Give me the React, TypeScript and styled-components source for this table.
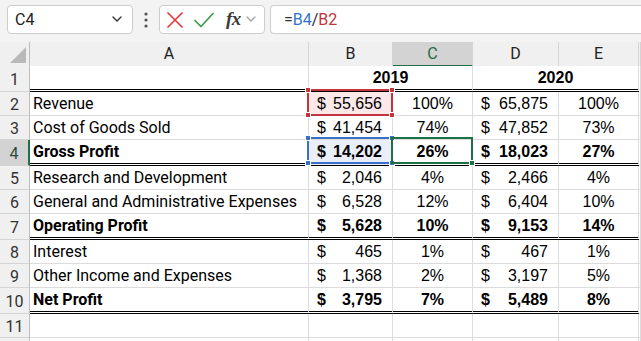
import React from "react";
import styled, { createGlobalStyle, css } from "styled-components";

const Global = createGlobalStyle`
  html, body { margin: 0; padding: 0; background: #f3f3f3; overflow: hidden; }
  body { width: 641px; height: 341px; }
  * { box-sizing: border-box; }
`;

const LABEL_FONT = `Roboto, "Noto Sans", sans-serif`;
const NUM_FONT = `"Liberation Sans", Arial, sans-serif`;
const COLS = "30px 279px 84px 80px 86px 80px 1fr";

const Page = styled.div`
  width: 641px;
  height: 341px;
  display: flex;
  flex-direction: column;
  overflow: hidden;
`;

const Toolbar = styled.div`
  height: 42px;
  flex: none;
  display: flex;
  align-items: flex-start;
  padding: 5px 0 0 7px;
  background: #f3f3f3;
`;

const Box = styled.div`
  height: 29px;
  background: #fff;
  border: 1px solid #cdcdcd;
  border-radius: 4px;
  display: flex;
  align-items: center;
`;

const NameBox = styled(Box)`
  width: 126px;
  padding: 0 10px 0 7px;
  justify-content: space-between;
  font: 16px ${LABEL_FONT};
  color: #222;
`;

const KebabSlot = styled.div`
  width: 26px;
  height: 29px;
  display: flex;
  align-items: center;
  justify-content: center;
`;

const FxBox = styled(Box)`
  width: 106px;
  padding-left: 7px;
`;

const FxText = styled.span`
  font-family: "Liberation Serif", "DejaVu Serif", serif;
  font-style: italic;
  font-weight: 700;
  font-size: 19px;
  color: #3a3a3a;
  margin-left: 12px;
  letter-spacing: -0.5px;
  line-height: 1;
  padding-bottom: 2px;
`;

const SmallChevronSlot = styled.span`
  margin-left: 5px;
  display: flex;
`;

const FormulaBox = styled(Box)`
  flex: 1;
  margin-left: 5px;
  padding-left: 13px;
  border-right: none;
  border-radius: 4px 0 0 4px;
  font: 16px ${LABEL_FONT};
  color: #333;
`;

const Ref = styled.span<{ $c: string }>`
  color: ${(p) => p.$c};
`;

const Sheet = styled.div`
  flex: 1;
  background: #fff;
  display: flex;
  flex-direction: column;
`;

const Row = styled.div<{ $h: number }>`
  display: grid;
  grid-template-columns: ${COLS};
  height: ${(p) => p.$h}px;
  flex: none;
`;

const HeadCell = styled.div<{ $active?: boolean }>`
  background: ${(p) => (p.$active ? "#d3d3d3" : "#f0f0f0")};
  border-right: 1px solid #d4d4d4;
  border-bottom: ${(p) => (p.$active ? "2px solid #1e7145" : "1px solid #bdbdbd")};
  color: ${(p) => (p.$active ? "#1e6b41" : "#222")};
  font: 16px/23px ${LABEL_FONT};
  text-align: center;
`;

const Corner = styled.div`
  background: #f0f0f0;
  border-right: 1px solid #bdbdbd;
  border-bottom: 1px solid #bdbdbd;
  display: flex;
  align-items: flex-end;
  justify-content: flex-end;
  padding: 0 3px 3px 0;
`;

const RowHead = styled.div<{ $active?: boolean }>`
  background: ${(p) => (p.$active ? "#d3d3d3" : "#f0f0f0")};
  border-right: ${(p) => (p.$active ? "2px solid #1e7145" : "1px solid #bdbdbd")};
  border-bottom: 1px solid #d4d4d4;
  color: ${(p) => (p.$active ? "#2b4a3a" : "#333")};
  font: 16px ${LABEL_FONT};
  display: flex;
  align-items: center;
  justify-content: center;
  padding-top: 2px;
`;

const DoubleLine = css`
  border-bottom: 3px double #000;
`;

const SingleLine = css`
  border-bottom: 1px solid #dcdcdc;
`;

const Cell = styled.div<{
  $double?: boolean;
  $bold?: boolean;
  $span?: number;
  $fill?: string;
}>`
  position: relative;
  background: ${(p) => p.$fill || "#fff"};
  border-right: 1px solid #dcdcdc;
  ${(p) => (p.$double ? DoubleLine : SingleLine)}
  font-weight: ${(p) => (p.$bold ? 700 : 400)};
  color: #000;
  font-size: 16px;
  line-height: 23px;
  white-space: nowrap;
  ${(p) => (p.$span ? `grid-column: span ${p.$span};` : "")}
`;

const LabelCell = styled(Cell)`
  font-family: ${LABEL_FONT};
  padding-left: 3px;
`;

const AcctCell = styled(Cell)`
  font-family: ${NUM_FONT};
  display: flex;
  justify-content: space-between;
  padding: 0 10px 0 8px;
`;

const CenterCell = styled(Cell)`
  font-family: ${NUM_FONT};
  text-align: center;
`;

const Mark = styled.div<{ $c: string }>`
  position: absolute;
  z-index: 3;
  top: -3px;
  left: -2px;
  right: -1px;
  bottom: -1px;
  border: 2px solid ${(p) => p.$c};
  pointer-events: none;
`;

const Handle = styled.span<{ $c: string; $pos: string }>`
  position: absolute;
  width: 6px;
  height: 6px;
  background: ${(p) => p.$c};
  border: 1px solid #fff;
  ${(p) => p.$pos}
`;

const RefBox = ({ color }: { color: string }) => (
  <Mark $c={color}>
    <Handle $c={color} $pos="top:-4px;left:-4px;" />
    <Handle $c={color} $pos="top:-4px;right:-4px;" />
    <Handle $c={color} $pos="bottom:-4px;left:-4px;" />
    <Handle $c={color} $pos="bottom:-4px;right:-4px;" />
  </Mark>
);

const ActiveBox = () => (
  <Mark $c="#1e7145">
    <Handle $c="#1e7145" $pos="bottom:-4px;right:-4px;" />
  </Mark>
);

const Chevron = ({ color, w, sw }: { color: string; w: number; sw: number }) => (
  <svg width={w} height={w / 2 + 2} viewBox={`0 0 ${w} ${w / 2 + 2}`}>
    <polyline
      points={`1,1 ${w / 2},${w / 2} ${w - 1},1`}
      fill="none"
      stroke={color}
      strokeWidth={sw}
      strokeLinecap="round"
      strokeLinejoin="round"
    />
  </svg>
);

const Kebab = () => (
  <svg width="4" height="16" viewBox="0 0 4 16">
    <circle cx="2" cy="2" r="1.6" fill="#555" />
    <circle cx="2" cy="8" r="1.6" fill="#555" />
    <circle cx="2" cy="14" r="1.6" fill="#555" />
  </svg>
);

const Cross = () => (
  <svg width="16" height="16" viewBox="0 0 16 16">
    <path d="M1 1 L15 15 M15 1 L1 15" stroke="#e23b3f" strokeWidth="1.7" strokeLinecap="round" />
  </svg>
);

const Check = () => (
  <svg width="20" height="16" viewBox="0 0 20 16" style={{ marginLeft: 11 }}>
    <polyline
      points="1,8.5 7,14.5 19,1.5"
      fill="none"
      stroke="#3e9a4c"
      strokeWidth="1.7"
      strokeLinecap="round"
      strokeLinejoin="round"
    />
  </svg>
);

const Triangle = () => (
  <svg width="16" height="16" viewBox="0 0 16 16">
    <polygon points="0,16 16,16 16,0" fill="#b9b9b9" />
  </svg>
);

type DataRow = {
  n: number;
  label?: string;
  bold?: boolean;
  double?: boolean;
  b?: string;
  c?: string;
  d?: string;
  e?: string;
};

const data: DataRow[] = [
  { n: 2, label: "Revenue", b: "55,656", c: "100%", d: "65,875", e: "100%" },
  { n: 3, label: "Cost of Goods Sold", b: "41,454", c: "74%", d: "47,852", e: "73%" },
  { n: 4, label: "Gross Profit", bold: true, double: true, b: "14,202", c: "26%", d: "18,023", e: "27%" },
  { n: 5, label: "Research and Development", b: "2,046", c: "4%", d: "2,466", e: "4%" },
  { n: 6, label: "General and Administrative Expenses", b: "6,528", c: "12%", d: "6,404", e: "10%" },
  { n: 7, label: "Operating Profit", bold: true, double: true, b: "5,628", c: "10%", d: "9,153", e: "14%" },
  { n: 8, label: "Interest", b: "465", c: "1%", d: "467", e: "1%" },
  { n: 9, label: "Other Income and Expenses", b: "1,368", c: "2%", d: "3,197", e: "5%" },
  { n: 10, label: "Net Profit", bold: true, double: true, b: "3,795", c: "7%", d: "5,489", e: "8%" },
];

const RED = "#c4343c";
const BLUE = "#3a6fc8";

const EmptyRow = ({ label }: { label?: string }) => (
  <Row $h={24}>
    <RowHead>{label}</RowHead>
    <LabelCell />
    <Cell />
    <Cell />
    <Cell />
    <Cell />
    <Cell />
  </Row>
);

export default function App() {
  return (
    <>
      <Global />
      <Page>
        <Toolbar>
          <NameBox>
            <span>C4</span>
            <Chevron color="#333" w={10} sw={1.4} />
          </NameBox>
          <KebabSlot>
            <Kebab />
          </KebabSlot>
          <FxBox>
            <Cross />
            <Check />
            <FxText>fx</FxText>
            <SmallChevronSlot>
              <Chevron color="#a0a0a0" w={10} sw={1.2} />
            </SmallChevronSlot>
          </FxBox>
          <FormulaBox>
            <span>=</span>
            <Ref $c="#2f74d0">B4</Ref>
            <Ref $c="#2a2a4a">/</Ref>
            <Ref $c={RED}>B2</Ref>
          </FormulaBox>
        </Toolbar>
        <Sheet>
          <Row $h={24}>
            <Corner>
              <Triangle />
            </Corner>
            <HeadCell>A</HeadCell>
            <HeadCell>B</HeadCell>
            <HeadCell $active>C</HeadCell>
            <HeadCell>D</HeadCell>
            <HeadCell>E</HeadCell>
            <HeadCell />
          </Row>
          <Row $h={26}>
            <RowHead>1</RowHead>
            <LabelCell $double />
            <CenterCell $double $bold $span={2}>2019</CenterCell>
            <CenterCell $double $bold $span={2}>2020</CenterCell>
            <Cell />
          </Row>
          {data.map((r) => {
            const isB2 = r.n === 2;
            const isB4 = r.n === 4;
            return (
              <Row key={r.n} $h={r.double ? 26 : 24}>
                <RowHead $active={r.n === 4}>{r.n}</RowHead>
                <LabelCell $double={r.double} $bold={r.bold}>
                  {r.label}
                </LabelCell>
                <AcctCell
                  $double={r.double}
                  $bold={r.bold}
                  $fill={isB2 ? "#fbe9ea" : isB4 ? "#e9eef8" : undefined}
                >
                  <span>$</span>
                  <span>{r.b}</span>
                  {isB2 && <RefBox color={RED} />}
                  {isB4 && <RefBox color={BLUE} />}
                </AcctCell>
                <CenterCell $double={r.double} $bold={r.bold}>
                  {r.c}
                  {isB4 && <ActiveBox />}
                </CenterCell>
                <AcctCell $double={r.double} $bold={r.bold}>
                  <span>$</span>
                  <span>{r.d}</span>
                </AcctCell>
                <CenterCell $double={r.double} $bold={r.bold}>
                  {r.e}
                </CenterCell>
                <Cell />
              </Row>
            );
          })}
          <EmptyRow label="11" />
          <EmptyRow />
        </Sheet>
      </Page>
    </>
  );
}
